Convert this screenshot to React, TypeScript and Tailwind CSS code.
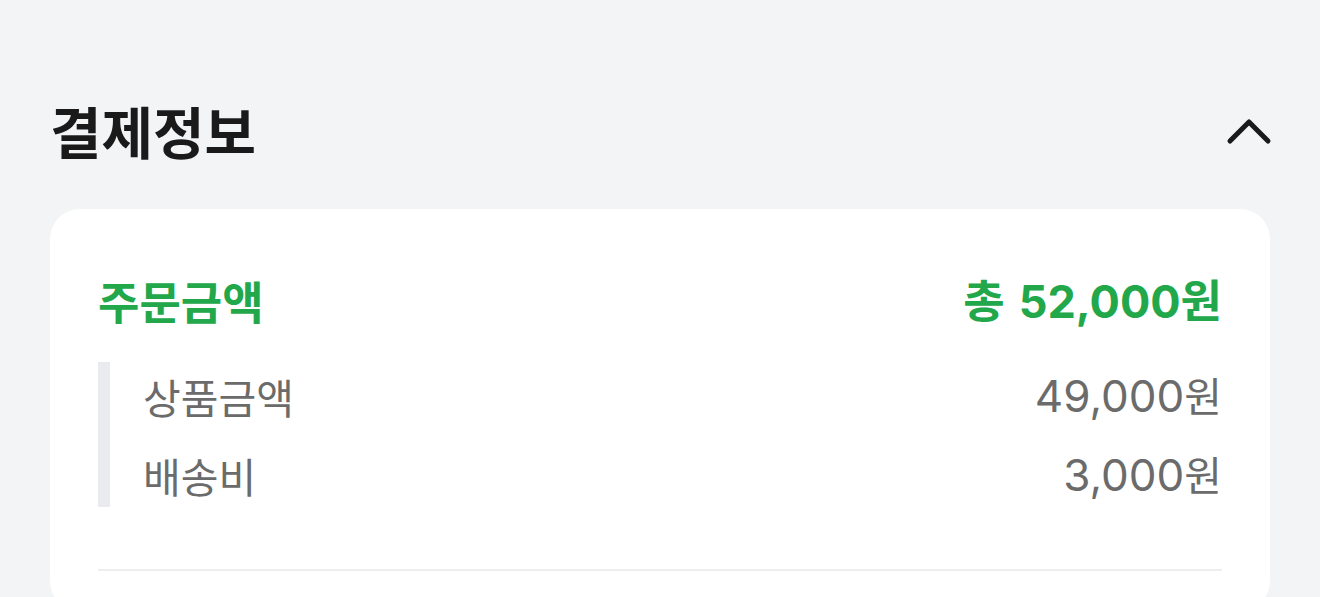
import React from "react";

const rows = [
  { label: "상품금액", value: "49,000" },
  { label: "배송비", value: "3,000" },
];

const kr = { fontFamily: '"Noto Sans CJK KR", "Noto Sans", sans-serif' };
const num = { fontFamily: 'Inter, "Noto Sans CJK KR", sans-serif' };

const ChevronUp = () => (
  <svg width="46" height="30" viewBox="0 0 46 30" fill="none">
    <polyline
      points="4,26 23,7 42,26"
      stroke="#1a1a1a"
      strokeWidth="5"
      strokeLinecap="round"
      strokeLinejoin="round"
    />
  </svg>
);

export default function App() {
  return (
    <div
      className="min-h-[597px] w-full bg-[#f2f4f6] px-[50px] pt-[99px] overflow-hidden"
      style={kr}
    >
      <div className="flex items-center justify-between">
        <h2 className="text-[56px] leading-[62px] font-bold text-[#1a1a1a]">
          결제정보
        </h2>
        <button className="mr-[-2px]">
          <ChevronUp />
        </button>
      </div>

      <div className="mt-12 rounded-[30px] bg-white px-12 pt-[66px] pb-10">
        <div className="flex h-[50px] items-center justify-between font-bold text-[#22a84a]">
          <span className="text-[45px] leading-none">주문금액</span>
          <span className="flex items-baseline text-[45px] leading-none">
            총
            <span className="ml-[14px] text-[45px] font-bold" style={num}>
              52,000
            </span>
            원
          </span>
        </div>

        <div className="mt-[37px] flex flex-col gap-[29px] border-l-[12px] border-[#e9ebef] pt-[9px] pb-[7px] pl-[33px]">
          {rows.map((r) => (
            <div
              key={r.label}
              className="flex h-[50px] items-center justify-between text-[41px] text-[#6b6b6b]"
            >
              <span className="leading-none">{r.label}</span>
              <span className="flex items-baseline leading-none">
                <span className="text-[44px]" style={num}>
                  {r.value}
                </span>
                원
              </span>
            </div>
          ))}
        </div>

        <div className="mt-[62px] h-[2px] bg-[#eeeeee]" />
      </div>
    </div>
  );
}
